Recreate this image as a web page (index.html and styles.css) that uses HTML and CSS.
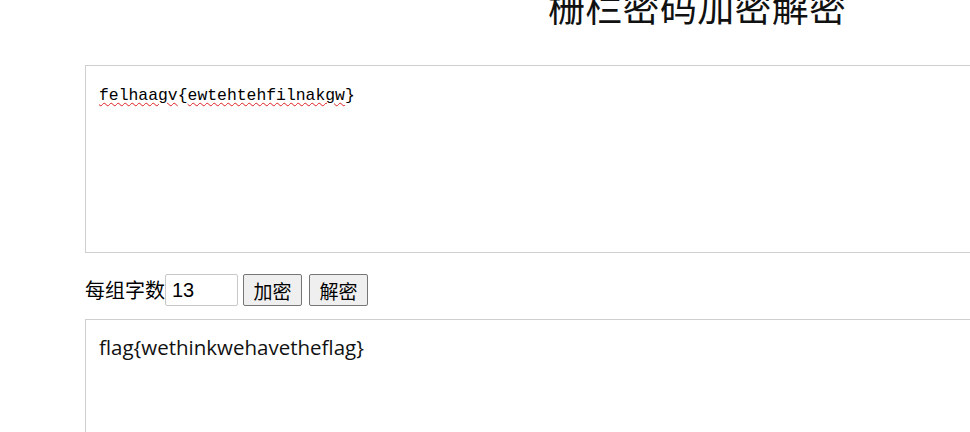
FILE: index.html
```html
<!DOCTYPE html>
<html lang="zh">
<head>
<meta charset="utf-8">
<title>栅栏密码加密解密</title>
<link rel="stylesheet" href="styles.css">
</head>
<body>
<div class="page">
  <h1 class="title">栅栏密码加密解密</h1>
  <div class="box box-in"><span class="sq">felhaagv</span>{<span class="sq">ewtehtehfilnakgw</span>}</div>
  <div class="controls">
    <span class="label">每组字数</span>
    <span class="num">13</span>
    <button class="btn">加密</button>
    <button class="btn">解密</button>
  </div>
  <div class="box box-out">flag{wethinkwehavetheflag}</div>
</div>
</body>
</html>
```
FILE: styles.css
```css
html, body {
  margin: 0;
  padding: 0;
  background: #fff;
  overflow: hidden;
  width: 970px;
  height: 432px;
}
.page {
  padding-left: 85px;
  font-family: "Noto Sans CJK SC", "Noto Sans", sans-serif;
  color: #000;
}
.title {
  margin: -19px 0 0 463px;
  font-size: 37px;
  font-weight: normal;
  line-height: 50px;
  height: 31px;
  overflow: visible;
  color: #111;
  font-family: "Noto Sans CJK SC", sans-serif;
  letter-spacing: 0.3px;
}
.box {
  box-sizing: border-box;
  width: 1100px;
  border: 1px solid #cfcfcf;
  padding: 13px 13px;
}
.box-in {
  margin-top: 53px;
  height: 188px;
  font-family: "Liberation Mono", monospace;
  font-size: 16.4px;
  line-height: 34px;
  color: #000;
}
.sq {
  text-decoration: underline wavy #e02020;
  text-decoration-thickness: 1px;
  text-underline-offset: 2px;
}
.controls {
  display: flex;
  align-items: center;
  height: 32px;
  margin-top: 21px;
  font-size: 20px;
}
.label {
  line-height: 32px;
  width: 80px;
  white-space: nowrap;
}
.num {
  box-sizing: border-box;
  width: 73px;
  height: 32px;
  border: 1px solid #c8c8c8;
  border-radius: 2px;
  padding-left: 6px;
  line-height: 30px;
  font-family: "Liberation Sans", sans-serif;
  font-size: 20px;
}
.btn {
  box-sizing: border-box;
  height: 32px;
  width: 59px;
  margin-left: 5px;
  padding: 0;
  border: 1px solid #767676;
  border-radius: 2px;
  background: #efefef;
  font-family: "Noto Sans CJK SC", sans-serif;
  font-size: 19px;
  color: #000;
}
.btn + .btn {
  margin-left: 7px;
}
.box-out {
  margin-top: 13px;
  height: 130px;
  font-family: "Open Sans", "Liberation Sans", sans-serif;
  font-size: 20.5px;
  line-height: 28px;
  color: #111;
}
```
